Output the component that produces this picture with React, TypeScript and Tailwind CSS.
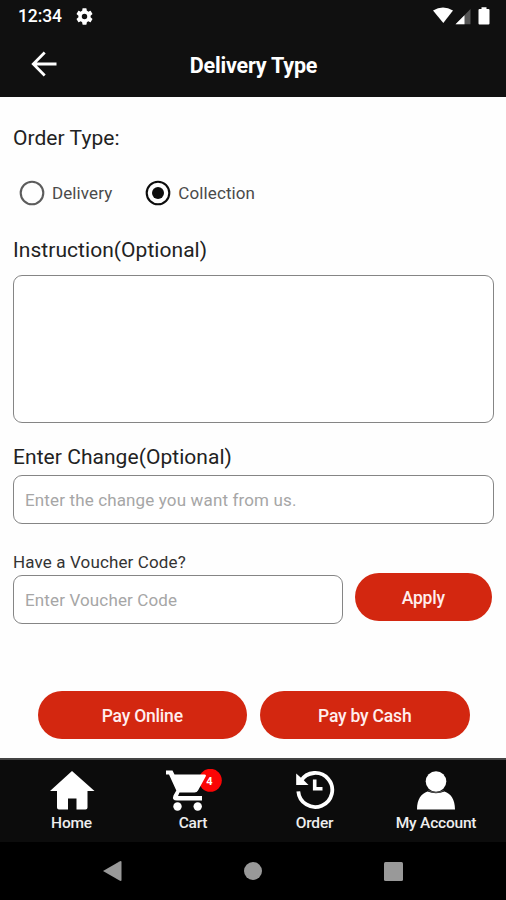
import React from "react";

function StatusBar() {
  return (
    <div className="flex h-8 shrink-0 items-center justify-between pl-[18px] pr-4">
      <div className="flex items-center gap-[12px]">
        <span className="w-[46px] text-[17.500px] leading-8 font-medium tracking-[-0.1px]">12:34</span>
        <svg className="h-[17px] w-[17px]" viewBox="2 2 20 20" fill="currentColor">
          <path d="M19.14 12.94c.04-.3.06-.61.06-.94s-.02-.64-.07-.94l2.03-1.58a.49.49 0 0 0 .12-.61l-1.92-3.32a.488.488 0 0 0-.59-.22l-2.39.96c-.5-.38-1.03-.7-1.62-.94l-.36-2.54a.484.484 0 0 0-.48-.41h-3.84c-.24 0-.43.17-.47.41l-.36 2.54c-.59.24-1.13.57-1.62.94l-2.39-.96c-.22-.08-.47 0-.59.22L2.74 8.87c-.12.21-.08.47.12.61l2.03 1.58c-.05.3-.09.63-.09.94s.02.64.07.94l-2.03 1.58a.49.49 0 0 0-.12.61l1.92 3.32c.12.22.37.29.59.22l2.39-.96c.5.38 1.03.7 1.62.94l.36 2.54c.05.24.24.41.48.41h3.84c.24 0 .44-.17.47-.41l.36-2.54c.59-.24 1.13-.56 1.62-.94l2.39.96c.22.08.47 0 .59-.22l1.92-3.32c.12-.22.07-.47-.12-.61zM12 15.200a3.200 3.200 0 1 1 0-6.400 3.200 3.200 0 0 1 0 6.400z" />
        </svg>
      </div>
      <svg className="h-[18px] w-[58px]" viewBox="432 6 58 18">
        <path d="M433 9.500Q443 3.500 453 9.500L443.300 22Z" fill="#fff" />
        <path d="M470.500 8V23.200H455.500Z" fill="#555" />
        <path d="M464.500 14.200V23.200H455.500Z" fill="#fff" />
        <path d="M481.500 6.300h5v1.700h2a1 1 0 0 1 1 1v13.600a1 1 0 0 1-1 1h-9a1 1 0 0 1-1-1V9a1 1 0 0 1 1-1h2z" fill="#fff" />
      </svg>
    </div>
  );
}

function TitleBar() {
  return (
    <div className="grid h-[65px] shrink-0 grid-cols-[1fr_auto_1fr] items-center">
      <svg className="-mt-0.5 ml-[31px] h-[26px] w-[26px]" viewBox="0 0 26 26" fill="none" stroke="currentColor" strokeWidth="2.800">
        <path d="M25.500 13H2.500M13.700 1.600L2.300 13L13.700 24.400" />
      </svg>
      <h1 className="ml-px pt-[2px] text-[21.500px] leading-8 font-bold tracking-[-0.2px]">Delivery Type</h1>
      <span />
    </div>
  );
}

function Radio({ label, checked }: { label: string; checked?: boolean }) {
  return (
    <label className="flex items-center gap-[7px]">
      <svg className="h-[26px] w-[26px]" viewBox="0 0 26 26">
        <circle cx="13" cy="13" r="11.300" fill="none" stroke={checked ? "#0c0c0c" : "#5c5c5c"} strokeWidth="2.100" />
        {checked && <circle cx="13" cy="13" r="6" fill="#0c0c0c" />}
      </svg>
      <span className="text-[17px] leading-6 tracking-[0.1px] text-[#4a4a4a]">{label}</span>
    </label>
  );
}

function HomeIcon() {
  return (
    <svg className="h-[42px] w-[46px]" viewBox="48.500 769 46 42" fill="#fff">
      <path d="M71.500 771L94 791H87V807.500Q87 809.500 85 809.500H76V798.500H67.500V809.500H58.500Q56.500 809.500 56.500 807.500V791H49.500Z" />
    </svg>
  );
}

function CartIcon() {
  return (
    <svg className="h-[42px] w-[58px]" viewBox="164 768 58 42">
      <circle cx="210.300" cy="779.300" r="11.500" fill="#fb0505" />
      <path d="M166 769.500H172.500L174.500 773.500H204.500Q206.500 773.500 205.700 775.500L198 789.500Q197 791.500 194.500 791.500H179.500L178 795H202V799.500H177Q171.500 799.500 173.500 794.500L176.300 789.500L169 773.500H166Z" fill="#fff" />
      <circle cx="177.500" cy="805.500" r="4.200" fill="#fff" />
      <circle cx="197.700" cy="805.500" r="4.200" fill="#fff" />
      <text x="206.300" y="784" fontSize="11" fontWeight="700" fill="#fff">4</text>
    </svg>
  );
}

function OrderIcon() {
  return (
    <svg className="h-[42px] w-[42px]" viewBox="294 769.500 42 42" fill="none" stroke="#fff">
      <path d="M300.800 781.500A17 17 0 1 1 298.300 791.800" strokeWidth="3.800" />
      <path d="M296.200 774V785.500H308.500L304 781Z" fill="#fff" stroke="none" />
      <path d="M314.700 780V789.300H322.500" strokeWidth="3.600" />
    </svg>
  );
}

function AccountIcon() {
  return (
    <svg className="h-[42px] w-[42px]" viewBox="415 768 42 42" fill="#fff">
      <path d="M417 808.500C417 798 421.500 792.500 427.500 790.500Q436 794 444.500 790.500C450.500 792.500 455 798 455 808.500Z" />
      <circle cx="436" cy="780.500" r="10.300" />
      <path d="M428.500 789.500Q436 793.500 443.500 789.500" fill="none" stroke="#777" strokeWidth="0.700" />
    </svg>
  );
}

function NavItem({ icon, label, width }: { icon: React.ReactNode; label: string; width: string }) {
  return (
    <a className={"flex shrink-0 flex-col items-center " + width}>
      {icon}
      <span className="mt-[2px] text-[15.500px] leading-[20px] font-medium tracking-[-0.200px] whitespace-nowrap text-[#eee]">{label}</span>
    </a>
  );
}

const field = "rounded-[9px] border border-[#858585] bg-white";
const pill = "flex h-12 items-center justify-center rounded-full bg-[#d32710] pt-[3px] text-[17.500px] tracking-[-0.200px] text-[#ffeeee] font-medium";
const heading = "text-[21px] leading-7 tracking-[0.050px]";
const placeholder = "pt-[3px] text-[17px] tracking-[0.140px] text-[#a6a6a6]";

export default function App() {
  return (
    <div className="flex h-[900px] w-[506px] flex-col overflow-hidden bg-[#fefefe] font-[Roboto,sans-serif]">
      <header className="flex h-[97px] shrink-0 flex-col bg-[#101010] text-white">
        <StatusBar />
        <TitleBar />
      </header>

      <main className="flex h-[661px] shrink-0 flex-col pl-[13px] text-[#222]">
        <h2 className={"mt-[27px] " + heading}>Order Type:</h2>
        <div className="mt-[28px] ml-[6px] flex gap-[33px]">
          <Radio label="Delivery" />
          <Radio label="Collection" checked />
        </div>
        <h2 className={"mt-[30px] " + heading}>Instruction(Optional)</h2>
        <div className={"mt-[11px] h-[148px] w-[481px] " + field} />
        <h2 className={"mt-[20px] " + heading}>Enter Change(Optional)</h2>
        <div className={"mt-[4px] flex h-[49px] w-[481px] items-center pl-[11px] " + field}>
          <span className={placeholder}>Enter the change you want from us.</span>
        </div>
        <p className="mt-[26px] text-[17px] leading-6 tracking-[0.130px] text-[#333]">Have a Voucher Code?</p>
        <div className="flex">
          <div className={"mt-[1px] flex h-[49px] w-[330px] items-center pl-[11px] " + field}>
            <span className={placeholder}>Enter Voucher Code</span>
          </div>
          <button className={"-mt-px ml-3 w-[136.500px] " + pill}>Apply</button>
        </div>
        <div className="mt-[67px] ml-[24.500px] flex gap-[13px]">
          <button className={"w-[209.500px] " + pill}>Pay Online</button>
          <button className={"w-[209.500px] " + pill}>Pay by Cash</button>
        </div>
      </main>

      <nav className="flex h-[84px] shrink-0 border-t-2 border-[#444] bg-[#0c0c0c] pt-[9px] pl-[22px]">
        <NavItem icon={<HomeIcon />} label="Home" width="w-[99px]" />
        <NavItem icon={<CartIcon />} label="Cart" width="w-[144px]" />
        <NavItem icon={<OrderIcon />} label="Order" width="w-[99px]" />
        <NavItem icon={<AccountIcon />} label="My Account" width="w-[142px] pl-[2px]" />
      </nav>
      <footer className="flex h-[58px] shrink-0 items-center bg-black pl-[102px]">
        <svg className="h-[22px] w-5" viewBox="0 0 20 22" fill="#999">
          <path d="M1 11L17.500 1.500Q19.500 0.500 19.500 2V20Q19.500 21.500 17.500 20.500Z" />
        </svg>
        <span className="ml-[122px] h-[18px] w-[18px] rounded-full bg-[#999]" />
        <span className="ml-[122px] h-[19px] w-[19px] rounded-[1.500px] bg-[#999]" />
      </footer>
    </div>
  );
}
